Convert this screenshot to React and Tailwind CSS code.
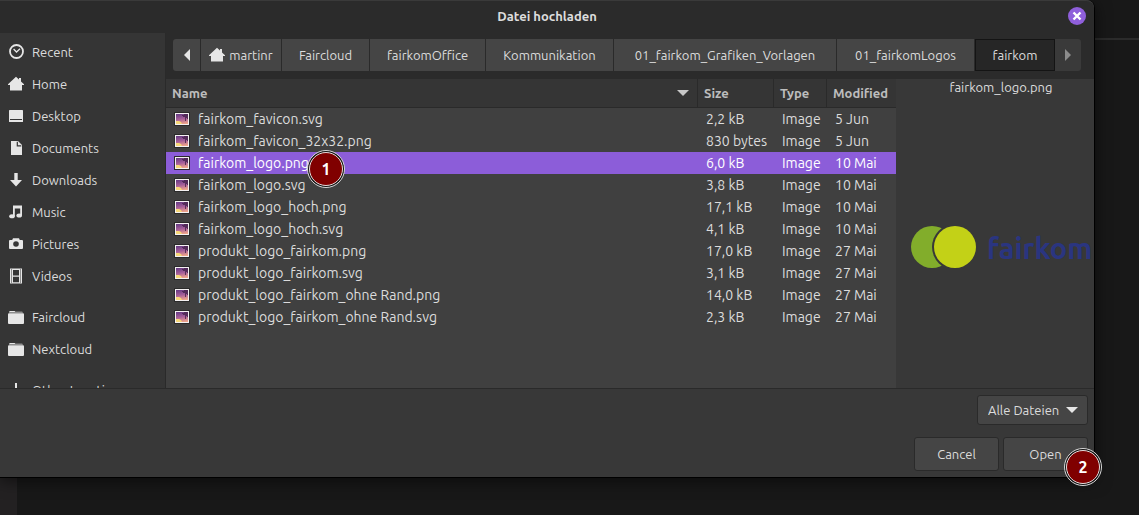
import React, { useState } from "react";

const PLACES = [
  { name: "Recent", icon: "recent" },
  { name: "Home", icon: "home" },
  { name: "Desktop", icon: "desktop" },
  { name: "Documents", icon: "documents" },
  { name: "Downloads", icon: "downloads" },
  { name: "Music", icon: "music" },
  { name: "Pictures", icon: "pictures" },
  { name: "Videos", icon: "videos" },
];

const BOOKMARKS = [
  { name: "Faircloud", icon: "folder" },
  { name: "Nextcloud", icon: "folder" },
];

const CRUMBS = [
  { name: "martinr", width: "w-[81px]", home: true },
  { name: "Faircloud", width: "w-[88px]" },
  { name: "fairkomOffice", width: "w-[116px]" },
  { name: "Kommunikation", width: "w-[128px]" },
  { name: "01_fairkom_Grafiken_Vorlagen", width: "w-[223px]" },
  { name: "01_fairkomLogos", width: "w-[138px]" },
];

const FILES = [
  { name: "fairkom_favicon.svg", size: "2,2 kB", modified: "5 Jun" },
  { name: "fairkom_favicon_32x32.png", size: "830 bytes", modified: "5 Jun" },
  { name: "fairkom_logo.png", size: "6,0 kB", modified: "10 Mai", step: "1" },
  { name: "fairkom_logo.svg", size: "3,8 kB", modified: "10 Mai" },
  { name: "fairkom_logo_hoch.png", size: "17,1 kB", modified: "10 Mai" },
  { name: "fairkom_logo_hoch.svg", size: "4,1 kB", modified: "10 Mai" },
  { name: "produkt_logo_fairkom.png", size: "17,0 kB", modified: "27 Mai" },
  { name: "produkt_logo_fairkom.svg", size: "3,1 kB", modified: "27 Mai" },
  { name: "produkt_logo_fairkom_ohne Rand.png", size: "14,0 kB", modified: "27 Mai" },
  { name: "produkt_logo_fairkom_ohne Rand.svg", size: "2,3 kB", modified: "27 Mai" },
];

const HomeShape = () => <path d="M8 .8 11 3.6V2h2v3.4L16 8.2V9h-2v5.6H2V9H0v-.8z" />;

const ICONS = {
  recent: (
    <>
      <circle cx="8.5" cy="7.5" r="6.5" fill="none" stroke="currentColor" strokeWidth="1.8" />
      <path d="M5.6 5 8.5 8 12 4.8" fill="none" stroke="currentColor" strokeWidth="1.3" />
    </>
  ),
  home: <HomeShape />,
  desktop: (
    <>
      <rect x="1" y="2" width="14" height="12" rx="0.6" />
      <path d="M2 11.5h12" stroke="#353535" strokeWidth="1" />
    </>
  ),
  documents: (
    <>
      <path d="M3 1h7l4 4v10H3z" />
      <path d="M9.3 1.8v4h4" fill="none" stroke="#353535" strokeWidth="1.2" />
    </>
  ),
  downloads: <path d="M6.3 1h3.4v7H14l-6 6.6L2 8h4.3z" />,
  music: (
    <>
      <path d="M5 1.5h9v10h-1.8V4.6H6.8v7.6H5z" />
      <ellipse cx="4" cy="12.2" rx="2.8" ry="2" />
      <ellipse cx="11.2" cy="11.4" rx="2.8" ry="2" />
    </>
  ),
  pictures: (
    <>
      <path d="M5 2.2h6l.8 1.8H14a1 1 0 0 1 1 1v7a1 1 0 0 1-1 1H2a1 1 0 0 1-1-1V5a1 1 0 0 1 1-1h2.2z" />
      <circle cx="8" cy="8" r="2.8" fill="#353535" />
    </>
  ),
  videos: (
    <>
      <path d="M2 .5h12v15H2z" />
      <path d="M5 2h6v5.5H5zM5 8.7h6v5.5H5z" fill="#353535" />
      <path d="M3.5 1.5v14M12.5 1.5v14" fill="none" stroke="#353535" strokeWidth="1" strokeDasharray="1 1" />
    </>
  ),
  folder: (
    <>
      <path d="M1 3.6V2.8l1-.8h4.6l.8.8H14.2l.8.8z" />
      <rect x="0" y="4.2" width="16" height="10.8" rx="1" />
    </>
  ),
};

function PlaceIcon({ type }) {
  return (
    <svg viewBox="0 0 16 16" className="size-4 shrink-0 text-[#e6e6e6]" fill="currentColor" aria-hidden="true">
      {ICONS[type]}
    </svg>
  );
}

function Place({ place }) {
  return (
    <li>
      <a href="#" className="flex h-8 items-center gap-2 px-2">
        <PlaceIcon type={place.icon} />
        {place.name}
      </a>
    </li>
  );
}

// Small sunset thumbnail with a palm tree
function ImageIcon() {
  return (
    <svg viewBox="0 0 16 14" className="h-3.5 w-4 shrink-0" aria-hidden="true">
      <defs>
        <linearGradient id="sunset" x1="0.4" y1="0" x2="0.6" y2="1">
          <stop offset="0" stopColor="#6d3f87" />
          <stop offset="0.5" stopColor="#a8609a" />
          <stop offset="1" stopColor="#f0a58b" />
        </linearGradient>
      </defs>
      <rect width="16" height="14" rx="0.5" fill="#2b2b2b" />
      <rect x="1" y="1" width="14" height="12" fill="#f4f1f2" />
      <rect x="2" y="2" width="12" height="10" fill="url(#sunset)" />
      <path d="M2 9h3l2 1 1 2H2z" fill="#f6d878" />
      <path d="M8 3h2V2h4v5h-1V6h-1v3h-1V5H9V4H8z" fill="#4a2650" opacity="0.85" />
    </svg>
  );
}

function StepBadge({ children, className }) {
  return (
    <span
      className={`absolute z-10 flex size-[38px] items-center justify-center rounded-full border border-[#d8d8d8] bg-[#111] p-px ${className}`}
    >
      <span className="flex size-full items-center justify-center rounded-full border border-[#e6dcdc] bg-[#800000] text-base font-bold text-white">
        {children}
      </span>
    </span>
  );
}

export default function App() {
  const [selected, setSelected] = useState("fairkom_logo.png");
  const headCell = "border-r border-b border-[#2a2a2a] px-1.5 text-left font-bold last:border-r-0";
  const button =
    "h-[34px] w-[85px] rounded-[3px] border border-[#2a2a2a] bg-[#454545] text-center hover:bg-[#4c4c4c]";

  return (
    <div className="flex h-screen flex-col overflow-hidden bg-[#181818] font-['Ubuntu','Noto_Sans',sans-serif] text-[13px] leading-5 text-[#dcdcdc]">
      <div className="flex min-h-0 flex-1">
        <div
          role="dialog"
          aria-labelledby="dialog-title"
          className="z-10 flex min-w-0 flex-1 flex-col rounded-tr-lg border-r border-b border-black bg-[#383838] shadow-[0_3px_16px_rgba(0,0,0,0.55)]"
        >
          {/* Title bar */}
          <header className="flex h-[33px] shrink-0 items-center rounded-tr-lg border-t border-[#3a3a3a] bg-[#2b2b2b] px-2 pb-0.5">
            <span className="w-[18px]" />
            <h1 id="dialog-title" className="flex-1 text-center font-semibold">
              Datei hochladen
            </h1>
            <button
              aria-label="Close"
              className="flex size-[18px] items-center justify-center rounded-full bg-[#8f5fdb] text-white"
            >
              <svg viewBox="0 0 10 10" className="size-2.5" stroke="currentColor" strokeWidth="2.4" aria-hidden="true">
                <path d="M1.5 1.5l7 7M8.5 1.5l-7 7" />
              </svg>
            </button>
          </header>

          <div className="flex min-h-0 flex-1 border-b border-[#2a2a2a]">
            {/* Places */}
            <nav className="w-[166px] shrink-0 overflow-hidden border-r border-[#2a2a2a] bg-[#353535] pt-[3px]">
              <ul>
                {PLACES.map((p) => (
                  <Place key={p.name} place={p} />
                ))}
              </ul>
              <ul className="my-[9px]">
                {BOOKMARKS.map((p) => (
                  <Place key={p.name} place={p} />
                ))}
              </ul>
              <a href="#" className="flex h-8 items-center gap-2 px-2">
                <svg viewBox="0 0 16 16" className="size-4 shrink-0" fill="#e6e6e6" aria-hidden="true">
                  <path d="M7 1h2v6h6v2H9v6H7V9H1V7h6z" />
                </svg>
                <span className="whitespace-nowrap">Other Locations</span>
              </a>
            </nav>

            <div className="flex min-w-0 flex-1 flex-col">
              {/* Path bar */}
              <div className="flex h-[46px] shrink-0 bg-[#2b2b2b] px-[7px] pt-1.5 pb-2">
                <button
                  aria-label="Back"
                  className="flex w-7 shrink-0 items-center justify-center rounded-l-[3px] border-r border-[#2a2a2a] bg-[#454545]"
                >
                  <svg viewBox="0 0 6 12" className="h-3 w-1.5" fill="#e6e6e6" aria-hidden="true">
                    <path d="M6 0v12L0 6z" />
                  </svg>
                </button>
                {CRUMBS.map((c) => (
                  <button
                    key={c.name}
                    className={`flex shrink-0 items-center justify-center gap-1 whitespace-nowrap border-r border-[#2a2a2a] bg-[#454545] ${c.width}`}
                  >
                    {c.home && (
                      <svg viewBox="0 0 16 16" className="size-4 shrink-0" fill="#e6e6e6" aria-hidden="true">
                        <HomeShape />
                      </svg>
                    )}
                    {c.name}
                  </button>
                ))}
                <button
                  aria-current="location"
                  className="w-20 shrink-0 border border-[#141414] bg-[#262626] text-center"
                >
                  fairkom
                </button>
                <button
                  aria-label="Forward"
                  className="flex w-[26px] shrink-0 items-center justify-center rounded-r-[3px] bg-[#3a3a3a]"
                >
                  <svg viewBox="0 0 6 12" className="h-3 w-1.5" fill="#8c8c8c" aria-hidden="true">
                    <path d="M0 0v12l6-6z" />
                  </svg>
                </button>
              </div>

              <div className="flex min-h-0 flex-1">
                {/* File list */}
                <div className="min-w-0 flex-1 bg-[#404040]">
                  <table className="w-full table-fixed border-separate border-spacing-0">
                    <thead className="bg-[#353535] text-[#bdbdbd]">
                      <tr className="h-[29px]">
                        <th className={headCell}>
                          <span className="flex items-center justify-between pr-0.5">
                            Name
                            <svg viewBox="0 0 12 6" className="h-1.5 w-3" fill="#c8c8c8" aria-hidden="true">
                              <path d="M0 0h12L6 6z" />
                            </svg>
                          </span>
                        </th>
                        <th className={`w-[76px] ${headCell}`}>Size</th>
                        <th className={`w-[53px] ${headCell}`}>Type</th>
                        <th className={`w-[69px] ${headCell}`}>Modified</th>
                      </tr>
                    </thead>
                    <tbody className="text-[14px]">
                      {FILES.map((f) => (
                        <tr
                          key={f.name}
                          onClick={() => setSelected(f.name)}
                          className={`h-[22px] whitespace-nowrap ${
                            f.name === selected ? "bg-[#8c5dd9] text-white" : ""
                          }`}
                        >
                          <td className="py-0 pl-2">
                            <span className="relative flex items-center gap-2">
                              <ImageIcon />
                              {f.name}
                              {f.step && <StepBadge className="-top-[3px] left-[133px]">{f.step}</StepBadge>}
                            </span>
                          </td>
                          <td className="py-0 pl-2">{f.size}</td>
                          <td className="py-0 pl-2">Image</td>
                          <td className="py-0 pl-2">{f.modified}</td>
                        </tr>
                      ))}
                    </tbody>
                  </table>
                </div>

                {/* Preview */}
                <aside className="flex w-[198px] shrink-0 flex-col pl-3">
                  <p className="text-center leading-4">{selected}</p>
                  <div className="flex flex-1 items-center pt-2.5 pl-0.5">
                    <svg viewBox="0 0 184 44" className="w-[184px] shrink-0" role="img" aria-label="fairkom">
                      <circle cx="22" cy="22" r="21" fill="#82ad2b" />
                      <circle cx="45" cy="22" r="23" fill="#383838" />
                      <circle cx="45" cy="22" r="21" fill="#c3d117" />
                      <text
                        x="77"
                        y="34"
                        fill="#2a3580"
                        fontSize="29"
                        fontWeight="600"
                        fontFamily="Ubuntu, 'Noto Sans', sans-serif"
                      >
                        fairkom
                      </text>
                    </svg>
                  </div>
                </aside>
              </div>
            </div>
          </div>

          {/* Filter and actions */}
          <footer className="flex shrink-0 flex-col items-end gap-3 px-1.5 py-1.5">
            <div className="relative">
              <select
                aria-label="File type"
                className="block h-[30px] w-[111px] appearance-none rounded-[3px] border border-[#2a2a2a] bg-[#454545] pl-2.5"
              >
                <option>Alle Dateien</option>
              </select>
              <svg
                viewBox="0 0 12 6"
                className="pointer-events-none absolute top-3 right-2.5 h-1.5 w-3"
                fill="#e6e6e6"
                aria-hidden="true"
              >
                <path d="M0 0h12L6 6z" />
              </svg>
            </div>
            <div className="flex gap-1">
              <button className={button}>Cancel</button>
              <div className="relative">
                <button className={button}>Open</button>
                <StepBadge className="top-[11px] left-[61px]">2</StepBadge>
              </div>
            </div>
          </footer>
        </div>

        {/* Desktop behind the dialog */}
        <div className="w-11 shrink-0 pt-[38px]">
          <div className="h-0.5 bg-[#2b2b2b]" />
        </div>
      </div>
      <div className="h-[37px] shrink-0">
        <div className="h-full w-[17px] bg-[#232122]" />
      </div>
    </div>
  );
}
